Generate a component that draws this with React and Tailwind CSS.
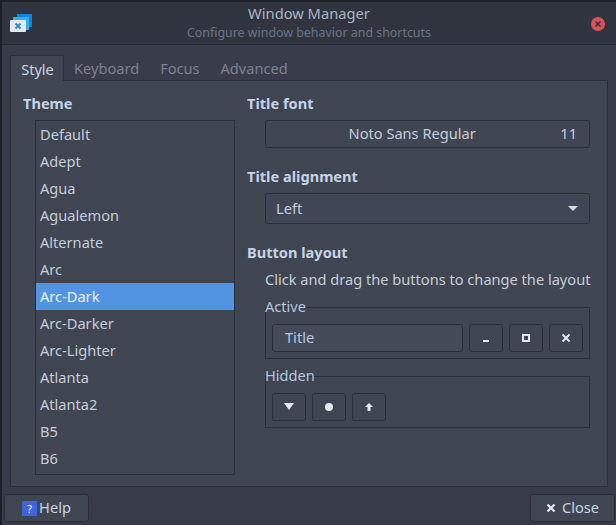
import { useState } from 'react';

const themes = ['Default', 'Adept', 'Agua', 'Agualemon', 'Alternate', 'Arc', 'Arc-Dark', 'Arc-Darker', 'Arc-Lighter', 'Atlanta', 'Atlanta2', 'B5', 'B6'];
const tabs = ['Keyboard', 'Focus', 'Advanced'];

function AppIcon() {
  return (
    <svg width="24" height="24" viewBox="0 0 24 24" className="shrink-0">
      <rect x="7" y="3" width="15" height="13" fill="#0d85e0" />
      <rect x="3" y="6" width="16" height="13" fill="#2fb0f0" />
      <rect x="0" y="9" width="16" height="12" rx="1" fill="#e6e8ea" />
      <path d="M5.5 12.5l5 5M10.5 12.5l-5 5" stroke="#2a8fd8" strokeWidth="2" />
    </svg>
  );
}

function Glyph({ children }) {
  return (
    <svg width="14" height="14" viewBox="0 0 14 14" fill="#e4e7eb">
      {children}
    </svg>
  );
}

function IconButton({ children }) {
  return (
    <button className="w-[34px] h-[28px] flex items-center justify-center rounded-[3px] border border-[#2b2e39] bg-[#404552]">
      {children}
    </button>
  );
}

function GroupBox({ title, children }) {
  return (
    <div>
      <div className="h-[10px] leading-[18px] text-[#b4c8e2] relative z-10">{title}</div>
      <div className="h-[52px] border border-[#2b2e39] flex items-end gap-[6px] px-[6px] pb-[6px]">{children}</div>
    </div>
  );
}

export default function App() {
  const [selected, setSelected] = useState('Arc-Dark');

  return (
    <div className="w-[616px] h-[525px] overflow-hidden bg-[#1d2027] pl-[2px] pt-[2px] font-['Noto_Sans',sans-serif] text-[14.6px] text-[#c5cdd9]">
      <div className="h-[523px] bg-[#383c4a] flex flex-col">
        <header className="h-[43px] shrink-0 bg-[#2f343f] border-b border-[#262a33] flex items-center pl-[8px] pr-[11px]">
          <AppIcon />
          <div className="flex-1 text-center pb-[1px] pr-[7px]">
            <div className="leading-[18px] mb-[2px] text-[14.7px] text-[#a9b4c4]">Window Manager</div>
            <div className="text-[12.4px] leading-[17px] text-[#697587]">Configure window behavior and shortcuts</div>
          </div>
          <svg width="14" height="14" viewBox="0 0 14 14" className="mt-[2px]">
            <circle cx="7" cy="7" r="7" fill="#d9505a" />
            <path d="M4.5 4.5l5 5M9.5 4.5l-5 5" stroke="#2f343f" strokeWidth="1.6" />
          </svg>
        </header>

        <div className="pl-[8px] pr-[8px] pt-[10px] flex flex-col">
          <nav className="flex h-[25px] relative z-10 items-start">
            <div className="w-[54px] h-[26px] pl-[1px] pt-[2px] bg-[#404552] border border-b-0 border-[#2b2e39] text-[#c5d3e6] flex items-center justify-center">Style</div>
            <div className="flex items-center h-[26px] pt-[2px] pl-[10px] gap-[21px] text-[#7c828d]">
              {tabs.map((t) => <span key={t}>{t}</span>)}
            </div>
          </nav>

          <main className="h-[407px] bg-[#404552] border border-[#2b2e39] flex pl-[12px] pr-[17px] pt-[13px]">
            <section className="w-[224px] shrink-0">
              <h2 className="font-bold text-[#c5d3e6] leading-[18px] mb-[8px]">Theme</h2>
              <ul className="ml-[12px] w-[200px] h-[355px] border border-[#2b2e39] overflow-hidden">
                {themes.map((t) => (
                  <li
                    key={t}
                    onClick={() => setSelected(t)}
                    className={t === selected
                      ? 'h-[27px] leading-[26px] pl-[4px] bg-[#5294e2] text-[#eef3fa]'
                      : 'h-[27px] leading-[26px] pl-[4px]'}
                  >
                    {t}
                  </li>
                ))}
              </ul>
            </section>

            <section className="flex-1 min-w-0">
              <h2 className="font-bold text-[#c5d3e6] leading-[18px] mb-[8px]">Title font</h2>
              <div className="ml-[18px] h-[28px] rounded-[3px] border border-[#2b2e39] bg-[#404552] flex items-center pr-[12px]">
                <span className="flex-1 text-center pr-[2px]">Noto Sans Regular</span>
                <span>11</span>
              </div>

              <h2 className="font-bold text-[#c5d3e6] leading-[18px] mt-[19px] mb-[8px]">Title alignment</h2>
              <div className="ml-[18px] h-[31px] rounded-[3px] border border-[#2b2e39] bg-[#414656] flex items-center justify-between pl-[10px] pr-[11px]">
                <span>Left</span>
                <svg width="10" height="5" viewBox="0 0 10 5" fill="#d5dae2"><path d="M0 0h10L5 5z" /></svg>
              </div>

              <h2 className="font-bold text-[#c5d3e6] leading-[18px] mt-[19px] mb-[9px]">Button layout</h2>
              <div className="ml-[18px]">
                <p className="leading-[18px] whitespace-nowrap mb-[9px]">Click and drag the buttons to change the layout</p>
                <GroupBox title="Active">
                  <div className="flex-1 h-[28px] rounded-[3px] border border-[#2b2e39] bg-[#454a59] flex items-center pl-[12px] text-[#b4c8e2]">Title</div>
                  <IconButton><Glyph><rect x="4" y="9" width="6" height="2" /></Glyph></IconButton>
                  <IconButton>
                    <Glyph><path fillRule="evenodd" d="M3 3h8v8H3zM5 5v4h4V5z" /></Glyph>
                  </IconButton>
                  <IconButton>
                    <svg width="14" height="14" viewBox="0 0 14 14"><path d="M3.5 3.5l7 7M10.5 3.5l-7 7" stroke="#e4e7eb" strokeWidth="2" /></svg>
                  </IconButton>
                </GroupBox>
                <div className="mt-[7px]">
                  <GroupBox title="Hidden">
                    <IconButton><Glyph><path d="M2 3h10l-5 7z" /></Glyph></IconButton>
                    <IconButton><Glyph><circle cx="7" cy="7" r="4" /></Glyph></IconButton>
                    <IconButton><Glyph><path d="M7 3l4 4H8.5v4h-3V7H3z" /></Glyph></IconButton>
                  </GroupBox>
                </div>
              </div>
            </section>
          </main>
        </div>

        <footer className="h-[38px] shrink-0 flex justify-between items-start pl-[2px] pr-[1px] pt-[7px]">
          <button className="w-[85px] h-[28px] rounded-[3px] border border-[#2b2e39] bg-[#404552] flex items-center justify-center gap-[2px] text-[#c5d3e6]">
            <span className="w-[15px] h-[15px] bg-[#3f63d8] text-white text-[11px] leading-[15px] text-center">?</span>
            Help
          </button>
          <button className="w-[85px] h-[28px] rounded-[3px] border border-[#2b2e39] bg-[#404552] flex items-center justify-center gap-[6px] text-[#c5d3e6]">
            <svg width="10" height="10" viewBox="0 0 10 10"><path d="M1.5 1.5l7 7M8.5 1.5l-7 7" stroke="#e4e7eb" strokeWidth="2.2" /></svg>
            Close
          </button>
        </footer>
      </div>
    </div>
  );
}
